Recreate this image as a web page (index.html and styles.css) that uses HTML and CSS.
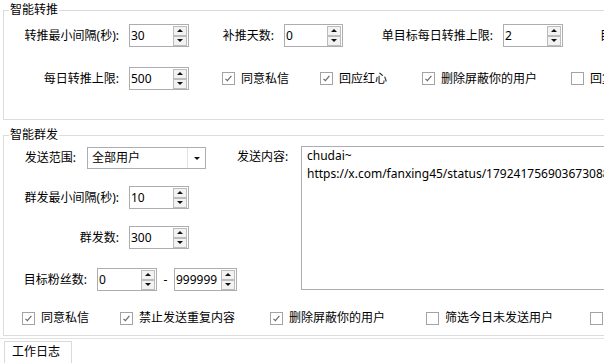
FILE: index.html
```html
<!DOCTYPE html>
<html lang="zh-CN">
<head>
<meta charset="utf-8">
<title>智能转推</title>
<link rel="stylesheet" href="styles.css">
</head>
<body>
<div class="group g1">
  <span class="gtitle">智能转推</span>
  <div class="row">
    <span class="lbl w115">转推最小间隔(秒):</span>
    <div class="spin"><span class="v">30</span><span class="btns"><i class="b up"></i><i class="b dn"></i></span></div>
    <span class="lbl w85">补推天数:</span>
    <div class="spin w59"><span class="v">0</span><span class="btns"><i class="b up"></i><i class="b dn"></i></span></div>
    <span class="lbl w150">单目标每日转推上限:</span>
    <div class="spin"><span class="v">2</span><span class="btns"><i class="b up"></i><i class="b dn"></i></span></div>
    <span class="tail">目标粉丝上限:</span>
  </div>
  <div class="row r2">
    <span class="lbl w115">每日转推上限:</span>
    <div class="spin"><span class="v">500</span><span class="btns"><i class="b up"></i><i class="b dn"></i></span></div>
    <div class="cbs">
      <label class="cb c98"><svg width="13" height="13" viewBox="0 0 13 13"><rect x="0.5" y="0.5" width="12" height="12" fill="#fff" stroke="#a3a3a3"/><path d="M3.5 6.8 L5.4 8.7 L9.4 3.8" fill="none" stroke="#6b6b6b" stroke-width="1.2"/></svg>同意私信</label>
      <label class="cb c102"><svg width="13" height="13" viewBox="0 0 13 13"><rect x="0.5" y="0.5" width="12" height="12" fill="#fff" stroke="#a3a3a3"/><path d="M3.5 6.8 L5.4 8.7 L9.4 3.8" fill="none" stroke="#6b6b6b" stroke-width="1.2"/></svg>回应红心</label>
      <label class="cb c149"><svg width="13" height="13" viewBox="0 0 13 13"><rect x="0.5" y="0.5" width="12" height="12" fill="#fff" stroke="#a3a3a3"/><path d="M3.5 6.8 L5.4 8.7 L9.4 3.8" fill="none" stroke="#6b6b6b" stroke-width="1.2"/></svg>删除屏蔽你的用户</label>
      <label class="cb"><svg width="13" height="13" viewBox="0 0 13 13"><rect x="0.5" y="0.5" width="12" height="12" fill="#fff" stroke="#a3a3a3"/></svg>回复评论</label>
    </div>
  </div>
</div>

<div class="group g2">
  <span class="gtitle">智能群发</span>
  <div class="gbody">
    <div class="left">
      <div class="row rA">
        <span class="lbl w72">发送范围:</span>
        <div class="combo"><span class="t">全部用户</span><span class="arr"></span></div>
      </div>
      <div class="row rB">
        <span class="lbl w115">群发最小间隔(秒):</span>
        <div class="spin"><span class="v">10</span><span class="btns"><i class="b up"></i><i class="b dn"></i></span></div>
      </div>
      <div class="row rB">
        <span class="lbl w115">群发数:</span>
        <div class="spin"><span class="v">300</span><span class="btns"><i class="b up"></i><i class="b dn"></i></span></div>
      </div>
      <div class="row rD">
        <span class="lbl w83">目标粉丝数:</span>
        <div class="spin"><span class="v">0</span><span class="btns"><i class="b up"></i><i class="b dn"></i></span></div>
        <span class="dash">-</span>
        <div class="spin w63"><span class="v">999999</span><span class="btns"><i class="b up"></i><i class="b dn"></i></span></div>
      </div>
    </div>
    <span class="clabel">发送内容:</span>
    <div class="memo">chudai~<br>https://x.com/fanxing45/status/1792417569036730880</div>
  </div>
  <div class="row cbrow">
    <label class="cb c98"><svg width="13" height="13" viewBox="0 0 13 13"><rect x="0.5" y="0.5" width="12" height="12" fill="#fff" stroke="#a3a3a3"/><path d="M3.5 6.8 L5.4 8.7 L9.4 3.8" fill="none" stroke="#6b6b6b" stroke-width="1.2"/></svg>同意私信</label>
    <label class="cb c150"><svg width="13" height="13" viewBox="0 0 13 13"><rect x="0.5" y="0.5" width="12" height="12" fill="#fff" stroke="#a3a3a3"/><path d="M3.5 6.8 L5.4 8.7 L9.4 3.8" fill="none" stroke="#6b6b6b" stroke-width="1.2"/></svg>禁止发送重复内容</label>
    <label class="cb c156"><svg width="13" height="13" viewBox="0 0 13 13"><rect x="0.5" y="0.5" width="12" height="12" fill="#fff" stroke="#a3a3a3"/><path d="M3.5 6.8 L5.4 8.7 L9.4 3.8" fill="none" stroke="#6b6b6b" stroke-width="1.2"/></svg>删除屏蔽你的用户</label>
    <label class="cb c164"><svg width="13" height="13" viewBox="0 0 13 13"><rect x="0.5" y="0.5" width="12" height="12" fill="#fff" stroke="#a3a3a3"/></svg>筛选今日未发送用户</label>
    <label class="cb"><svg width="13" height="13" viewBox="0 0 13 13"><rect x="0.5" y="0.5" width="12" height="12" fill="#fff" stroke="#a3a3a3"/></svg>自动</label>
  </div>
</div>

<div class="split"></div>
<div class="tab">工作日志</div>
</body>
</html>
```

FILE: styles.css
```css
html, body {
  margin: 0;
  overflow: hidden;
  background: #fff;
}
body {
  width: 604px;
  height: 363px;
  font-family: "Noto Sans", "Noto Sans CJK SC", sans-serif;
  font-size: 12px;
  line-height: 14px;
  color: #000;
}

.group {
  position: relative;
  box-sizing: border-box;
  width: 720px;
  margin-left: 3px;
  border: 1px solid #dcdcdc;
}
.g1 {
  margin-top: 10px;
  height: 110px;
  padding-top: 13px;
}
.g2 {
  margin-top: 15px;
  height: 201px;
  padding-top: 10px;
}
.gtitle {
  position: absolute;
  left: 5px;
  top: -8px;
  padding: 0 1px;
  background: #fff;
  line-height: 14px;
}

.row {
  display: flex;
  align-items: center;
  white-space: nowrap;
  height: 23px;
}
.r2 { margin-top: 20px; }

.lbl {
  flex: none;
  text-align: right;
  margin-right: 10px;
}
.w72 { width: 72px; margin-right: 11px; }
.w83 { width: 83px; }
.w85 { width: 85px; }
.w115 { width: 115px; }
.w150 { width: 150px; }
.tail { margin-left: 37px; }

.spin {
  flex: none;
  box-sizing: border-box;
  width: 60px;
  height: 23px;
  border: 1px solid #abadb3;
  display: flex;
  align-items: center;
  padding-left: 1px;
  background: #fff;
}
.w59 { width: 59px; }
.w63 { width: 63px; }
.spin .v { flex: 1; }
.btns {
  display: flex;
  flex-direction: column;
  margin-right: 1px;
}
.b {
  box-sizing: border-box;
  width: 14px;
  height: 10px;
  border: 1px solid #bcbcbc;
  background: #f2f2f2;
  display: flex;
  align-items: center;
  justify-content: center;
}
.up::after, .dn::after, .arr::after {
  content: "";
  width: 0;
  height: 0;
  border-left: 3px solid transparent;
  border-right: 3px solid transparent;
}
.up::after { border-bottom: 3px solid #111; }
.dn::after { border-top: 3px solid #111; }

.cbs {
  display: flex;
  margin-left: 33px;
}
.cb {
  flex: none;
  display: flex;
  align-items: center;
}
.cb svg { flex: none; margin-right: 6px; }
.c98 { width: 98px; }
.c102 { width: 102px; }
.c149 { width: 149px; }
.c150 { width: 150px; }
.c156 { width: 156px; }
.c164 { width: 164px; }

.gbody {
  display: flex;
  align-items: flex-start;
}
.left {
  flex: none;
  width: 233px;
}
.rA { margin-top: 1px; height: 22px; }
.rB { margin-top: 17px; }
.rD { margin-top: 19px; }

.combo {
  flex: none;
  box-sizing: border-box;
  width: 119px;
  height: 22px;
  border: 1px solid #abadb3;
  display: flex;
  align-items: center;
  padding-left: 4px;
}
.combo .t { flex: 1; }
.arr {
  width: 17px;
  height: 20px;
  display: flex;
  align-items: center;
  justify-content: center;
  border-left: 1px solid #e2e2e2;
}
.arr::after { border-top: 3px solid #111; }

.dash {
  flex: none;
  width: 17px;
  text-align: center;
}

.clabel {
  flex: none;
  width: 64px;
  padding-top: 4px;
  white-space: nowrap;
}
.memo {
  flex: none;
  box-sizing: border-box;
  width: 400px;
  height: 144px;
  border: 1px solid #abadb3;
  padding: 0 5px;
  line-height: 18px;
  white-space: nowrap;
}

.cbrow {
  margin-top: 20px;
  height: 14px;
  padding-left: 18px;
}

.split {
  width: 604px;
  height: 1px;
  margin-top: 2px;
  background: #e3e3e3;
}
.tab {
  box-sizing: border-box;
  width: 68px;
  height: 24px;
  margin: 2px 0 0 4px;
  border: 1px solid #d9d9d9;
  border-bottom: none;
  padding: 3px 0 0 7px;
}
```
